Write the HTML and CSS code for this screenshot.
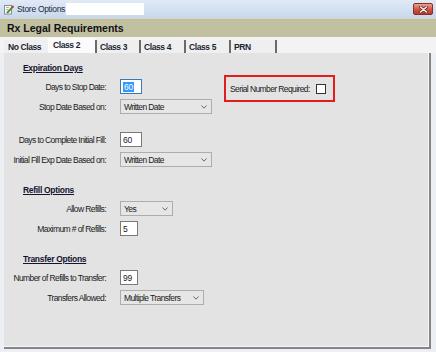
FILE: index.html
```html
<!DOCTYPE html>
<html>
<head>
<meta charset="utf-8">
<title>Store Options</title>
<link rel="stylesheet" href="styles.css">
</head>
<body>
<div class="titlebar">
  <svg class="app-icon" viewBox="0 0 11 11" width="11" height="11">
    <rect x="1.5" y="1.5" width="7" height="8.5" fill="#fff" stroke="#8c8c8c"/>
    <line x1="3" y1="3.5" x2="6" y2="3.5" stroke="#b0b0b0"/>
    <line x1="3" y1="5.5" x2="5" y2="5.5" stroke="#b0b0b0"/>
    <line x1="4" y1="9" x2="10" y2="2.5" stroke="#3f9a3a" stroke-width="2"/>
    <line x1="9" y1="3.5" x2="10.5" y2="2" stroke="#d9402a" stroke-width="2"/>
  </svg>
  <span class="title">Store Options</span>
  <span class="title-field"></span>
  <span class="close">
    <svg viewBox="0 0 9 7" width="9" height="7">
      <path d="M1.5 1 L7.5 6 M7.5 1 L1.5 6" stroke="#7a2a20" stroke-width="3" stroke-linecap="round"/>
      <path d="M1.5 1 L7.5 6 M7.5 1 L1.5 6" stroke="#f4f4f4" stroke-width="1.5" stroke-linecap="round"/>
    </svg>
  </span>
</div>
<div class="header">Rx Legal Requirements</div>
<div class="tabs">
  <span class="tab tab-first">No Class</span>
  <span class="tab tab-active">Class 2</span>
  <span class="tab">Class 3</span>
  <span class="tab">Class 4</span>
  <span class="tab">Class 5</span>
  <span class="tab tab-last">PRN</span>
</div>
<div class="panel">
  <div class="top">
    <div class="group">
      <div class="heading">Expiration Days</div>
      <div class="row"><span class="lbl">Days to Stop Date:</span><span class="tb tb-focus w22"><span class="sel">60</span></span></div>
      <div class="row"><span class="lbl">Stop Date Based on:</span><span class="dd w92"><span>Written Date</span><svg class="chev" viewBox="0 0 6 4" width="6" height="4"><polyline points="0.5,0.5 3,3.2 5.5,0.5" fill="none" stroke="#6a6a6a"/></svg></span></div>
    </div>
    <div class="serial"><span class="lbl-plain">Serial Number Required:</span><span class="chk"></span></div>
  </div>
  <div class="group g-sub">
    <div class="row"><span class="lbl">Days to Complete Initial Fill:</span><span class="tb w22">60</span></div>
    <div class="row"><span class="lbl">Initial Fill Exp Date Based on:</span><span class="dd w92"><span>Written Date</span><svg class="chev" viewBox="0 0 6 4" width="6" height="4"><polyline points="0.5,0.5 3,3.2 5.5,0.5" fill="none" stroke="#6a6a6a"/></svg></span></div>
  </div>
  <div class="group g-sec">
    <div class="heading">Refill Options</div>
    <div class="row"><span class="lbl">Allow Refills:</span><span class="dd w53"><span>Yes</span><svg class="chev" viewBox="0 0 6 4" width="6" height="4"><polyline points="0.5,0.5 3,3.2 5.5,0.5" fill="none" stroke="#6a6a6a"/></svg></span></div>
    <div class="row"><span class="lbl">Maximum # of Refills:</span><span class="tb w18">5</span></div>
  </div>
  <div class="group g-sec">
    <div class="heading">Transfer Options</div>
    <div class="row"><span class="lbl">Number of Refills to Transfer:</span><span class="tb w18">99</span></div>
    <div class="row"><span class="lbl">Transfers Allowed:</span><span class="dd w84"><span>Multiple Transfers</span><svg class="chev" viewBox="0 0 6 4" width="6" height="4"><polyline points="0.5,0.5 3,3.2 5.5,0.5" fill="none" stroke="#6a6a6a"/></svg></span></div>
  </div>
</div>
</body>
</html>
```

FILE: styles.css
```css
* { box-sizing: border-box; }
html, body { margin: 0; padding: 0; }
body {
  width: 436px;
  height: 352px;
  overflow: hidden;
  background: #eceff3;
  font-family: "Liberation Sans", Arial, sans-serif;
  color: #1a1a1a;
}

.titlebar {
  height: 18px;
  display: flex;
  align-items: center;
  padding-left: 3px;
  background: linear-gradient(#e0eaf6, #c8d8ec);
}
.app-icon { display: block; }
.title {
  margin-left: 3px;
  font-size: 8.5px;
  letter-spacing: -0.3px;
  color: #1e2a3c;
}
.title-field {
  margin-left: 1px;
  width: 78px;
  height: 12px;
  background: #fff;
}
.close {
  margin-left: auto;
  margin-right: 3px;
  width: 20px;
  height: 12px;
  border: 1px solid #8a2e24;
  border-radius: 2px;
  background: linear-gradient(#e8a393, #cf5a46 50%, #b83a27);
  display: flex;
  align-items: center;
  justify-content: center;
}

.header {
  height: 19px;
  background: #c1c0a1;
  border-top: 1px solid #d8d7c3;
  display: flex;
  align-items: center;
  padding-left: 7px;
  font-weight: bold;
  font-size: 10.5px;
  color: #111;
}

.tabs {
  height: 16px;
  background: #f3f3f3;
  display: flex;
  align-items: flex-end;
  padding-left: 4px;
}
.tab {
  height: 13px;
  width: 45px;
  padding-left: 3px;
  display: flex;
  align-items: center;
  border-left: 2px solid #6a6a6a;
  background: #efefef;
  font-weight: bold;
  font-size: 8.5px;
  letter-spacing: -0.4px;
  color: #1b1f33;
  white-space: nowrap;
}
.tab-first { width: 44px; border-left: none; padding-left: 4px; }
.tab-active {
  width: 47px;
  height: 15px;
  border-left: none;
  padding-left: 5px;
  padding-bottom: 2px;
  background: #fbfbfb;
}
.tab:nth-child(3) { width: 44px; }
.tab-last { width: 48px; border-right: 2px solid #6a6a6a; }

.panel {
  margin-left: 4px;
  width: 427px;
  height: 296px;
  background: #e3e3e3;
  border-right: 2px solid #858585;
  border-bottom: 2px solid #858585;
  box-shadow: inset -1px -1px 0 #f7f7f7;
  padding-top: 9px;
}

.top { display: flex; align-items: flex-start; }
.top > .group { width: 207px; }
.group { display: flex; flex-direction: column; gap: 5px; }
.g-sub { margin-top: 18px; }
.g-sec { margin-top: 17px; }

.heading {
  height: 12px;
  line-height: 12px;
  padding-left: 19px;
  font-weight: bold;
  font-size: 8.5px;
  letter-spacing: -0.3px;
  text-decoration: underline;
  color: #14142e;
}

.row {
  height: 15px;
  display: grid;
  grid-template-columns: 102px max-content;
  column-gap: 14px;
  align-items: center;
}
.lbl, .lbl-plain {
  font-size: 8.5px;
  letter-spacing: -0.6px;
  white-space: nowrap;
}
.lbl { text-align: right; }

.tb {
  height: 15px;
  border: 1px solid #7a7a7a;
  background: #fff;
  display: flex;
  align-items: center;
  padding-left: 2px;
  font-size: 8.5px;
  letter-spacing: -0.3px;
}
.tb-focus { border-color: #3d7ab3; }
.sel { background: #3399ff; color: #fff; padding: 0 1px; }

.dd {
  height: 15px;
  border: 1px solid #adadad;
  background: #e6e6e6;
  display: flex;
  align-items: center;
  justify-content: space-between;
  padding: 0 4px 0 3px;
  font-size: 8.5px;
  letter-spacing: -0.6px;
  white-space: nowrap;
}
.chev { display: block; flex: none; }

.w18 { width: 18px; }
.w22 { width: 22px; }
.w53 { width: 53px; }
.w84 { width: 84px; }
.w92 { width: 92px; }

.serial {
  margin-left: 13px;
  margin-top: 13px;
  width: 111px;
  height: 27px;
  border: 2px solid #e21d1d;
  display: flex;
  align-items: center;
  padding-left: 4px;
}
.chk {
  margin-left: 6px;
  width: 10px;
  height: 10px;
  border: 1px solid #333;
  background: #fff;
}
```
